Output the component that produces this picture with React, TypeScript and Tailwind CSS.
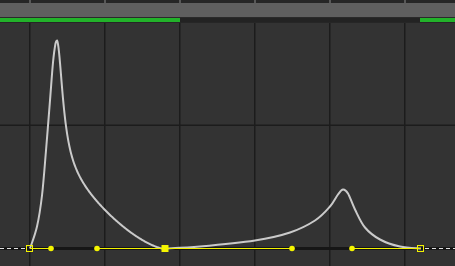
import React from "react";

type P = [number, number];

function smoothPath(pts: P[]): string {
  let d = `M ${pts[0][0]} ${pts[0][1]}`;
  for (let i = 0; i < pts.length - 1; i++) {
    const p0 = pts[i - 1] || pts[i];
    const p1 = pts[i];
    const p2 = pts[i + 1];
    const p3 = pts[i + 2] || p2;
    const c1: P = [p1[0] + (p2[0] - p0[0]) / 6, p1[1] + (p2[1] - p0[1]) / 6];
    const c2: P = [p2[0] - (p3[0] - p1[0]) / 6, p2[1] - (p3[1] - p1[1]) / 6];
    d += ` C ${c1[0].toFixed(2)} ${c1[1].toFixed(2)}, ${c2[0].toFixed(2)} ${c2[1].toFixed(2)}, ${p2[0]} ${p2[1]}`;
  }
  return d;
}

const OFF = 23; // graph top in page coords
const B = 248 - OFF + 0.5; // baseline centre in svg coords

const seg1Left: P[] = [
  [30, 248], [37, 226], [42, 195], [46, 150], [50, 100], [53, 62], [55.5, 43], [57, 40],
];

// analytic tail of the first peak
function tailPts(): P[] {
  const pts: P[] = [];
  for (let t = 0; t <= 108; t += 0.5) {
    const lor = 120 / (1 + (t / 7) ** 2) - (1.0 * t) / 108;
    const tail = 88 * Math.pow(Math.max(0, 1 - t / 108), 1.5);
    const h = Math.max(0, lor + tail);
    pts.push([57 + t, 248 - h]);
  }
  return pts;
}

const seg2: P[] = [
  [165, 248], [200, 246], [255, 240], [290, 232], [315, 220], [330, 206], [338, 194], [343, 189],
  [348, 193], [355, 209], [365, 227], [380, 239], [400, 246], [421, 248],
];

const sh = (pts: P[]): P[] => pts.map(([x, y]) => [x, y - OFF + 0.5]);

function polyPath(pts: P[]): string {
  return pts.map(([x, y], i) => `${i ? "L" : "M"} ${x.toFixed(2)} ${y.toFixed(2)}`).join(" ");
}

const gridX = [30, 105, 180, 255, 330, 405];

export default function App() {
  const tail = tailPts();
  const d1 = smoothPath(sh(seg1Left)) + " " + polyPath(sh(tail)).replace(/^M/, "L");
  return (
    <div className="w-[455px] h-[266px] bg-[#333333] flex flex-col overflow-hidden">
      <svg width="455" height="3" className="block bg-[#262626]">
        {gridX.map((x) => (
          <rect key={x} x={x - 0.5} y={0} width={1} height={3} fill="#8a8a8a" />
        ))}
      </svg>
      <div className="h-[14px] bg-[#5f5f5f]" />
      <div className="h-[1px] bg-[#2a2a2a]" />
      <div className="h-[4px] flex bg-[#232323]">
        <div className="w-[180px] bg-[#22b22a]" />
        <div className="flex-1" />
        <div className="w-[35px] bg-[#22b22a]" />
      </div>
      <div className="h-[1px] bg-[#262626]" />
      <svg width="455" height="243" className="block">
        {gridX.map((x) => (
          <rect key={x} x={x - 1} y={0} width={1.5} height={243} fill="#1c1c1c" />
        ))}
        <rect x={0} y={125 - OFF - 0.5} width={455} height={1.5} fill="#1c1c1c" />
        <rect x={0} y={B - 1.5} width={455} height={3} fill="#161616" />
        <line x1={0} y1={B} x2={27} y2={B} stroke="#e0e0e0" strokeWidth={1} strokeDasharray="4 3" />
        <line x1={425} y1={B} x2={455} y2={B} stroke="#e0e0e0" strokeWidth={1} strokeDasharray="4 3" />
        <path d={d1} fill="none" stroke="#cacaca" strokeWidth={2} strokeLinejoin="round" />
        <path d={smoothPath(sh(seg2))} fill="none" stroke="#cacaca" strokeWidth={2} />
        <g stroke="#f2f200" strokeWidth={1}>
          <line x1={30} y1={B} x2={51} y2={B} />
          <line x1={97} y1={B} x2={292} y2={B} />
          <line x1={352} y1={B} x2={421} y2={B} />
        </g>
        <g fill="#f5f500">
          <circle cx={51} cy={B} r={2.8} />
          <circle cx={97} cy={B} r={2.8} />
          <circle cx={292} cy={B} r={2.8} />
          <circle cx={352} cy={B} r={2.8} />
          <rect x={161.5} y={B - 3.5} width={7} height={7} />
        </g>
        <rect x={26.5} y={B - 3} width={6} height={6} fill="none" stroke="#f2f200" strokeWidth={1} />
        <rect x={417.5} y={B - 3} width={6} height={6} fill="none" stroke="#f2f200" strokeWidth={1} />
      </svg>
    </div>
  );
}
